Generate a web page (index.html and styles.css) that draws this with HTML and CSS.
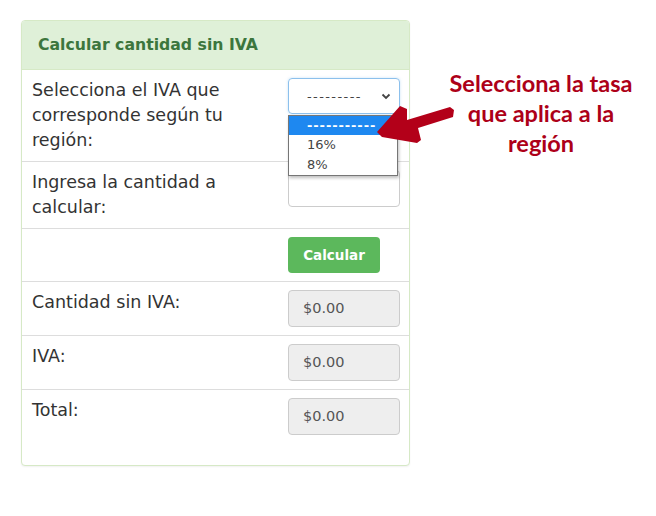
FILE: index.html
```html
<!DOCTYPE html>
<html lang="es">
<head>
<meta charset="utf-8">
<title>Calcular cantidad sin IVA</title>
<link rel="stylesheet" href="styles.css">
</head>
<body>
<div class="page">
  <div class="panel">
    <div class="panel-heading">Calcular cantidad sin IVA</div>
    <div class="panel-body">
      <div class="row">
        <div class="label">Selecciona el IVA que corresponde según tu región:</div>
        <div class="ctrl">
          <div class="select">
            <span class="select-text">---------</span>
            <svg class="chev" width="10" height="7" viewBox="0 0 10 7"><path d="M1.5 1.5 L5 5 L8.5 1.5" fill="none" stroke="#444" stroke-width="1.8"/></svg>
          </div>
          <div class="dropdown">
            <div class="opt sel">-----------</div>
            <div class="opt">16%</div>
            <div class="opt">8%</div>
          </div>
        </div>
      </div>
      <div class="row">
        <div class="label">Ingresa la cantidad a calcular:</div>
        <div class="ctrl"><div class="input"></div></div>
      </div>
      <div class="row">
        <div class="label"></div>
        <div class="ctrl"><div class="btn">Calcular</div></div>
      </div>
      <div class="row">
        <div class="label">Cantidad sin IVA:</div>
        <div class="ctrl"><div class="input ro">$0.00</div></div>
      </div>
      <div class="row">
        <div class="label">IVA:</div>
        <div class="ctrl"><div class="input ro">$0.00</div></div>
      </div>
      <div class="row last">
        <div class="label">Total:</div>
        <div class="ctrl"><div class="input ro">$0.00</div></div>
      </div>
    </div>
  </div>
  <svg class="arrow" width="90" height="50" viewBox="370 100 90 50">
    <polygon points="377,132 400,106 407,109 407,120 450,107 454,110 453,117 418,128 421,140 417,143 382,137" fill="#b30019"/>
  </svg>
  <div class="note">Selecciona la tasa<br>que aplica a la<br>región</div>
</div>
</body>
</html>
```
FILE: styles.css
```css
html, body {
  margin: 0;
  padding: 0;
  background: #fff;
}
.page {
  position: relative;
  width: 656px;
  height: 516px;
  padding: 20px 0 0 21px;
  box-sizing: border-box;
  font-family: "DejaVu Sans", sans-serif;
  color: #333;
}
.panel {
  width: 389px;
  border: 1px solid #d6e9c6;
  border-radius: 4px;
  box-sizing: border-box;
  box-shadow: 0 1px 2px rgba(0,0,0,0.06);
  background: #fff;
}
.panel-heading {
  background: #dff0d8;
  color: #3c763d;
  font-weight: bold;
  font-size: 15.7px;
  height: 48px;
  line-height: 48px;
  padding: 0 16px;
  border-bottom: 1px solid #d6e9c6;
  border-radius: 3px 3px 0 0;
}
.panel-body {
  padding: 0 0 22px 0;
}
.row {
  display: grid;
  grid-template-columns: 240px 112px;
  justify-content: space-between;
  padding: 8px 9px 8px 10px;
  border-bottom: 1px solid #ddd;
}
.row.last {
  border-bottom: none;
}
.label {
  font-size: 17.5px;
  line-height: 25px;
  color: #333;
}
.ctrl {
  position: relative;
}
.select {
  height: 36px;
  border: 1px solid #8cc0ec;
  border-radius: 4px;
  box-sizing: border-box;
  display: flex;
  align-items: center;
  padding: 0 8px 0 18px;
  box-shadow: 0 0 3px rgba(102,175,233,0.35);
}
.select-text {
  flex: 1;
  font-size: 13px;
  color: #444;
  letter-spacing: 1.4px;
}
.chev {
  display: block;
}
.dropdown {
  position: absolute;
  left: 0;
  top: 37px;
  width: 110px;
  border: 1px solid #767676;
  background: #fff;
  box-sizing: border-box;
  box-shadow: 1px 2px 3px rgba(0,0,0,0.25);
  z-index: 2;
}
.opt {
  height: 20px;
  line-height: 20px;
  font-size: 13px;
  color: #444;
  padding-left: 18px;
}
.opt.sel {
  background: #1e88f0;
  color: #fff;
  font-weight: bold;
  height: 19px;
  line-height: 19px;
  letter-spacing: 0.9px;
}
.input {
  height: 37px;
  border: 1px solid #ccc;
  border-radius: 4px;
  box-sizing: border-box;
  font-size: 14.5px;
  color: #555;
  line-height: 35px;
  padding-left: 14px;
  background: #fff;
}
.input.ro {
  background: #eee;
}
.btn {
  width: 92px;
  height: 36px;
  background: #5cb85c;
  border-radius: 4px;
  color: #fff;
  font-weight: bold;
  font-size: 13.5px;
  line-height: 36px;
  text-align: center;
}
.arrow {
  position: absolute;
  left: 370px;
  top: 100px;
  z-index: 3;
}
.note {
  position: absolute;
  left: 431px;
  top: 68px;
  width: 220px;
  text-align: center;
  font-family: "Lato", "Open Sans", sans-serif;
  font-weight: bold;
  font-size: 23.5px;
  line-height: 30px;
  color: #ad0018;
}
```
